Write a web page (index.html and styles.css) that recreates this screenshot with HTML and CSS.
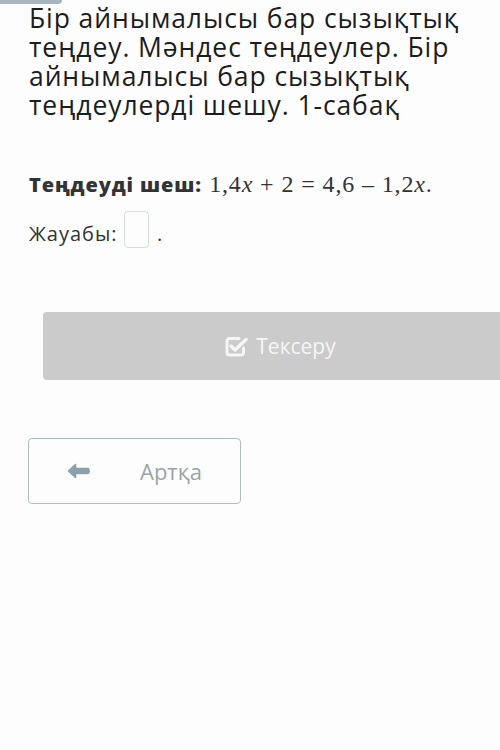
FILE: index.html
```html
<!DOCTYPE html>
<html lang="kk">

<head>
  <meta charset="UTF-8">
  <meta name="viewport" content="width=device-width, initial-scale=1.0">
  <title>Бір айнымалысы бар сызықтық теңдеу</title>
  <link rel="stylesheet" href="styles.css">
</head>

<body>
  <div class="top-tab"></div>
  <div class="page">
    <h1 class="lesson-title">Бір айнымалысы бар сызықтық теңдеу. Мәндес теңдеулер. Бір айнымалысы бар сызықтық теңдеулерді шешу. 1-сабақ</h1>

    <div class="task">
      <span class="task-label">Теңдеуді шеш:</span>
      <span class="math">1,4<i>x</i><span class="op">+</span>2<span class="op">=</span>4,6<span class="op">–</span>1,2<i>x</i>.</span>
    </div>

    <div class="answer">
      Жауабы: <span class="answer-box"></span> <span class="dot">.</span>
    </div>

    <button class="check-btn">
      <svg width="23" height="21" viewBox="0 0 23 21">
        <path d="M14 2.5H4.5A2.5 2.5 0 0 0 2 5v11.5A2.5 2.5 0 0 0 4.5 19h11.5a2.5 2.5 0 0 0 2.5-2.5V12" fill="none" stroke="#f6f6f6" stroke-width="3" stroke-linecap="round" />
        <path d="M6 10l4 4L21 3.5" fill="none" stroke="#f6f6f6" stroke-width="3.4" stroke-linecap="round" stroke-linejoin="round" />
      </svg>
      Тексеру
    </button>

    <button class="back-btn">
      <svg width="23" height="16" viewBox="0 0 23 16">
        <path d="M1.5 8L8.5 1.5V5.5h12a1.5 1.5 0 0 1 1.5 1.5v2a1.5 1.5 0 0 1-1.5 1.5h-12v4z" fill="#89a1ad" stroke="#89a1ad" stroke-width="1.6" stroke-linejoin="round" />
      </svg>
      <span class="back-text">Артқа</span>
    </button>
  </div>
</body>

</html>
```

FILE: styles.css
```css
body {
  margin: 0;
  background-color: #fdfdfd;
  font-family: "Open Sans", sans-serif;
  color: #222;
  overflow: hidden;
}

.top-tab {
  width: 62px;
  height: 4px;
  background: #a8b5c1;
  border-bottom-right-radius: 4px;
}

.page {
  padding-left: 29px;
}

.lesson-title {
  margin: 0;
  font-size: 26.5px;
  font-weight: 400;
  letter-spacing: 0.9px;
  line-height: 29px;
  color: #1d1d1d;
  width: 460px;
}

.task {
  margin-top: 51px;
  font-size: 20px;
  line-height: 27px;
  color: #333;
}

.task-label {
  font-weight: 800;
  letter-spacing: 0.9px;
}

.math {
  font-family: "Liberation Serif", serif;
  font-size: 24px;
  letter-spacing: 0.8px;
  margin-left: 2px;
}

.op {
  margin: 0 7px;
}

.answer {
  margin-top: 13px;
  font-size: 20px;
  line-height: 27px;
  color: #333;
  letter-spacing: 1px;
}

.answer-box {
  display: inline-block;
  width: 23px;
  height: 35px;
  border: 1px solid #d6dedb;
  border-radius: 4px;
  vertical-align: -7px;
}

.dot {
  margin-left: 2px;
}

button {
  font-family: "Open Sans", sans-serif;
  border-radius: 4px;
  display: flex;
  align-items: center;
}

.check-btn {
  margin-top: 64px;
  margin-left: 14px;
  width: 475px;
  height: 68px;
  border: 0;
  background: #cbcbcb;
  color: #f6f6f6;
  font-size: 21px;
  justify-content: center;
  gap: 8px;
}

.back-btn {
  margin-top: 58px;
  margin-left: -1px;
  width: 213px;
  height: 66px;
  border: 1px solid #a9c0c0;
  background: #fdfdfd;
  color: #9aa5a5;
  font-size: 22px;
  padding: 0 0 0 38px;
}

.back-text {
  margin-left: 50px;
}
```
